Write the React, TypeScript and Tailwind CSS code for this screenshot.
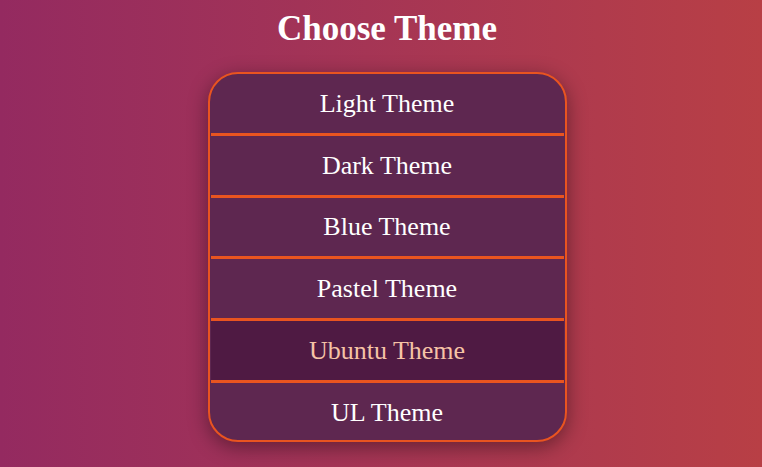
import React from 'react';

const themes = ['Light Theme', 'Dark Theme', 'Blue Theme', 'Pastel Theme', 'Ubuntu Theme', 'UL Theme'];

const App: React.FC = () => {
  const active = 'Ubuntu Theme';

  return (
    <div className="w-[762px] h-[467px] overflow-hidden bg-gradient-to-r from-[#942a60] to-[#b83f45] font-['Liberation_Serif',serif] text-white">
      <div className="flex flex-col items-center pl-3 pt-[9px]">
        <h1 className="text-[35px] leading-[40px] font-bold">Choose Theme</h1>

        <div className="mt-[23px] w-[359px] h-[370px] overflow-hidden rounded-[30px] border-2 border-[#e95420] bg-[#5e2750] shadow-[0_5px_20px_rgba(0,0,0,0.4)]">
          {themes.map((name) => (
            <div
              key={name}
              className={
                name === active
                  ? 'mx-px h-[61.75px] flex items-center justify-center border-b-[3px] border-[#e95420] bg-[#4f1a43] text-[26px] text-[#f6c3a6]'
                  : 'mx-px h-[61.75px] flex items-center justify-center border-b-[3px] border-[#e95420] text-[26px]'
              }
            >
              {name}
            </div>
          ))}
        </div>
      </div>
    </div>
  );
};

export default App;
